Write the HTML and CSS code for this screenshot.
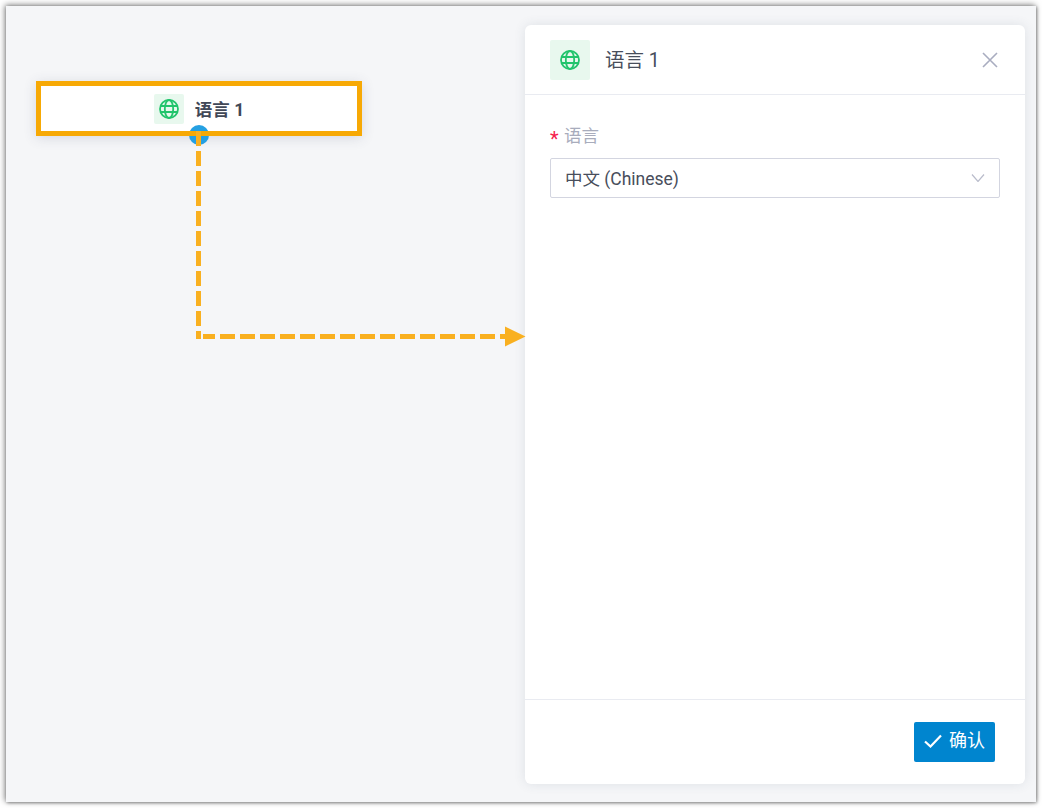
FILE: index.html
```html
<!DOCTYPE html>
<html lang="zh">
<head>
<meta charset="utf-8">
<title>语言 1</title>
<link rel="stylesheet" href="styles.css">
</head>
<body>
<main class="canvas">
  <div class="node">
    <span class="icon-box icon-box-small">
      <svg class="globe" viewBox="0 0 20 20" width="20" height="20"><circle cx="10" cy="10" r="9"/><ellipse cx="10" cy="10" rx="4.200" ry="9"/><path d="M1.600 7h16.800M1.600 13h16.800"/></svg>
    </span>
    <span class="node-title">语言 1</span>
  </div>
  <svg class="connector" viewBox="0 0 1042 808" width="1042" height="808">
    <circle class="port" cx="199" cy="135" r="10"/>
    <rect class="node-edge" x="36" y="131" width="326" height="5"/>
    <path class="dash" d="M198.500 131V339"/>
    <path class="dash dash-h" d="M203 336.500H506"/>
    <path class="arrow" d="M505 326.500L525.500 336.500L505 346.500Z"/>
  </svg>
  <aside class="panel">
    <header class="panel-head">
      <span class="icon-box">
        <svg class="globe" viewBox="0 0 20 20" width="20" height="20"><circle cx="10" cy="10" r="9"/><ellipse cx="10" cy="10" rx="4.200" ry="9"/><path d="M1.600 7h16.800M1.600 13h16.800"/></svg>
      </span>
      <h1 class="panel-title">语言 1</h1>
      <svg class="close" viewBox="0 0 16 16" width="16" height="16"><path d="M1 1L15 15M15 1L1 15"/></svg>
    </header>
    <section class="panel-body">
      <label class="field-label"><span class="req">*</span>语言</label>
      <div class="select">
        <span>中文 (Chinese)</span>
        <svg class="chev" viewBox="0 0 14 8" width="14" height="8"><path d="M1 .5L7 7.500L13 .5"/></svg>
      </div>
    </section>
    <footer class="panel-foot">
      <button class="confirm" type="button">
        <svg viewBox="0 0 18 14" width="18" height="14"><path d="M1 7.500L6.500 12.500L17 1.500"/></svg>
        <span class="confirm-text">确认</span>
      </button>
    </footer>
  </aside>
</main>
</body>
</html>
```
FILE: styles.css
```css
* { box-sizing: border-box; }
html, body { margin: 0; height: 808px; overflow: hidden; background: #fff; }
body {
  padding: 6px;
  font-family: Roboto, "Noto Sans CJK SC", sans-serif;
}
.canvas {
  width: 1030px;
  height: 796px;
  background: #f5f6f8;
  box-shadow: -1px -1px 6px rgba(0, 0, 0, .5), 1px 1px 3px rgba(0, 0, 0, .35);
  display: flex;
  justify-content: space-between;
  align-items: flex-start;
  padding: 19px 11px 18px 30px;
}
.node {
  width: 326px;
  height: 55px;
  margin-top: 56px;
  background: #fff;
  border: 5px solid #f7a905;
  box-shadow: 0 2px 12px rgba(60, 70, 100, .16);
  display: flex;
  align-items: center;
  justify-content: center;
  gap: 11px;
}
.node-title { font-size: 17.500px; font-weight: 700; color: #414857; line-height: 24px; margin-top: 2px; }
.icon-box {
  width: 40px;
  height: 40px;
  background: #e8f8ee;
  border-radius: 2px;
  display: flex;
  align-items: center;
  justify-content: center;
  flex: none;
}
.icon-box-small { width: 30px; height: 30px; }
.globe { fill: none; stroke: #22c46c; stroke-width: 1.800; }
.connector { position: absolute; left: 0; top: 0; z-index: 2; pointer-events: none; }
.port { fill: #25a0e2; }
.node-edge { fill: #f7a905; }
.dash { fill: none; stroke: #f9b020; stroke-width: 5; stroke-dasharray: 15 5; }
.dash-h { stroke-dashoffset: 3; }
.arrow { fill: #f9b020; }
.panel {
  width: 500px;
  height: 759px;
  background: #fff;
  border-radius: 6px;
  box-shadow: 0 0 12px rgba(60, 70, 100, .12);
  display: flex;
  flex-direction: column;
}
.panel-head {
  height: 70px;
  flex: none;
  border-bottom: 1px solid #e9ebf1;
  padding: 0 27px 0 25px;
  display: flex;
  align-items: center;
  gap: 15px;
}
.panel-title { margin: 2px 0 0; flex: 1; font-size: 19.500px; line-height: 28px; font-weight: 400; color: #484e5b; }
.close { fill: none; stroke: #a9adc0; stroke-width: 1.600; }
.panel-body { flex: 1; padding: 30px 25px 0; }
.field-label { display: flex; height: 24px; line-height: 22px; font-size: 17.500px; color: #a8acbc; margin-bottom: 9px; }
.req { color: #f5224d; width: 14px; font-size: 20px; line-height: 29px; height: 24px; }
.select {
  height: 40px;
  border: 1px solid #d3d5e0;
  border-radius: 2px;
  padding: 0 14px 2px 14px;
  display: flex;
  align-items: center;
  justify-content: space-between;
  font-size: 17.500px;
  color: #484e5b;
}
.chev { fill: none; stroke: #b9bccb; stroke-width: 1.200; margin-top: 2px; }
.panel-foot {
  height: 85px;
  flex: none;
  border-top: 1px solid #e9ebf1;
  padding: 22px 30px 0 0;
  display: flex;
  justify-content: flex-end;
  align-items: flex-start;
}
.confirm {
  width: 81px;
  height: 40px;
  background: #0085cf;
  border: 0;
  border-radius: 2px;
  color: #fff;
  font: inherit;
  font-size: 18px;
  display: flex;
  align-items: center;
  justify-content: center;
  gap: 7px;
  padding: 0;
}
.confirm-text { line-height: 24px; margin-top: -3px; }
.confirm svg { fill: none; stroke: #fff; stroke-width: 2.200; margin-top: -2px; }
```
